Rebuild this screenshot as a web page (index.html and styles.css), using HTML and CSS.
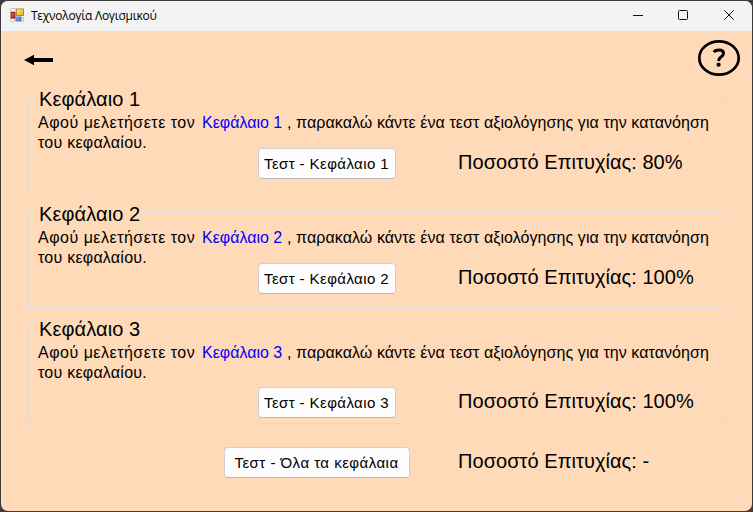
FILE: index.html
```html
<!DOCTYPE html>
<html lang="el">
<head>
<meta charset="utf-8">
<title>Τεχνολογία Λογισμικού</title>
<link rel="stylesheet" href="styles.css">
</head>
<body>
<div class="window">
  <header class="titlebar">
    <svg class="app-icon" width="14" height="14" viewBox="0 0 14 14">
      <defs>
        <linearGradient id="gold" x2="1" y2="1"><stop stop-color="#fff0a0"/><stop offset="1" stop-color="#e5a500"/></linearGradient>
        <linearGradient id="red" x2="1" y2="1"><stop stop-color="#e88070"/><stop offset="1" stop-color="#a81010"/></linearGradient>
        <linearGradient id="blue" x2="1" y2="1"><stop stop-color="#8db9f4"/><stop offset="1" stop-color="#2460c8"/></linearGradient>
      </defs>
      <path d="M.5.5h5v3h-5zM.5 10.500h4v3h-4zM11.500 9.500h2v4h-2z" fill="#f8f8f8" stroke="#c3c7cc"/>
      <rect x="6.500" y="1" width="7" height="6.500" fill="url(#gold)" stroke="#b68a20"/>
      <rect x="1" y="4.500" width="4" height="5.500" fill="url(#red)" stroke="#9c2020"/>
      <rect x="6" y="9" width="5" height="4" fill="url(#blue)" stroke="#5b86c8"/>
    </svg>
    <span class="title">Τεχνολογία Λογισμικού</span>
    <svg class="controls" width="104" height="12" viewBox="0 0 104 12" fill="none" stroke="#111">
      <path d="M0 6.500h10"/>
      <rect x="45.500" y="1.500" width="9" height="9" rx="1"/>
      <path d="M91.300 1.300l9.400 9.400M100.700 1.300l-9.400 9.400"/>
    </svg>
  </header>
  <main class="client">
    <nav class="toolbar">
      <svg class="back" width="30" height="12" viewBox="0 0 30 12"><path d="M0 6L10 .8V4H29V8H10V11.200Z"/></svg>
      <svg class="help" width="44" height="38" viewBox="0 0 44 38" fill="none" stroke="#000">
        <ellipse cx="22" cy="19" rx="19.700" ry="16.700" stroke-width="2.700"/>
        <path d="M16.700 13Q18.500 11 22 11Q26.500 11 26.500 14.500Q26.500 16.300 24 18Q21.700 19.500 21.700 22" stroke-width="3"/>
        <circle cx="21.600" cy="25.700" r="2.100" fill="#000" stroke="none"/>
      </svg>
    </nav>
    <fieldset class="chapter">
      <legend>Κεφάλαιο 1</legend>
      <p><span class="lead">Αφού μελετήσετε τον</span><a>Κεφάλαιο 1</a><span class="rest">, παρακαλώ κάντε ένα τεστ αξιολόγησης για την κατανόηση</span><br><span class="tail">του κεφαλαίου.</span></p>
      <div class="row"><button>Τεστ - Κεφάλαιο 1</button><span class="score">Ποσοστό Επιτυχίας: 80%</span></div>
    </fieldset>
    <fieldset class="chapter">
      <legend>Κεφάλαιο 2</legend>
      <p><span class="lead">Αφού μελετήσετε τον</span><a>Κεφάλαιο 2</a><span class="rest">, παρακαλώ κάντε ένα τεστ αξιολόγησης για την κατανόηση</span><br><span class="tail">του κεφαλαίου.</span></p>
      <div class="row"><button>Τεστ - Κεφάλαιο 2</button><span class="score">Ποσοστό Επιτυχίας: 100%</span></div>
    </fieldset>
    <fieldset class="chapter low">
      <legend>Κεφάλαιο 3</legend>
      <p><span class="lead">Αφού μελετήσετε τον</span><a>Κεφάλαιο 3</a><span class="rest">, παρακαλώ κάντε ένα τεστ αξιολόγησης για την κατανόηση</span><br><span class="tail">του κεφαλαίου.</span></p>
      <div class="row"><button>Τεστ - Κεφάλαιο 3</button><span class="score">Ποσοστό Επιτυχίας: 100%</span></div>
    </fieldset>
    <div class="row all"><button class="wide">Τεστ - Όλα τα κεφάλαια</button><span class="score">Ποσοστό Επιτυχίας: -</span></div>
  </main>
</div>
</body>
</html>
```
FILE: styles.css
```css
* { box-sizing: border-box; }
body {
  margin: 0;
  height: 512px;
  overflow: hidden;
  background: #3c3a3c;
  color: #000;
  font-family: "Liberation Sans", Arial, sans-serif;
}
.window {
  width: 751px;
  height: 510px;
  margin: 1px;
  border-radius: 7px;
  overflow: hidden;
  background: #ffdab9;
}
.titlebar {
  height: 30px;
  display: flex;
  align-items: center;
  padding: 0 15px 2px 9px;
  background: #f3f3f3;
}
.title {
  margin-left: 7px;
  font: 12px "Open Sans", "Noto Sans", sans-serif;
  letter-spacing: -0.27px;
}
.controls { margin-left: auto; }
.toolbar {
  display: flex;
  justify-content: space-between;
  align-items: flex-start;
  height: 55px;
  padding: 8px 11px 0 23px;
}
.back { margin-top: 15px; }
.chapter {
  width: 698px;
  height: 108px;
  margin: 0 0 7px 27px;
  padding: 0;
  border: 1px solid #dcdcdc;
}
legend {
  height: 23px;
  margin-left: 5px;
  padding: 0 4px 0 5px;
  font-size: 20px;
  line-height: 27px;
  letter-spacing: 0.1px;
}
p {
  margin: 4px 0 0 9px;
  font-size: 16px;
  line-height: 20px;
  white-space: nowrap;
}
p span, p a { display: inline-block; }
.lead { width: 164px; letter-spacing: 0.5px; }
.rest { letter-spacing: 0.075px; }
.tail { letter-spacing: 0.24px; }
p a { width: 85px; color: #00f; }
.row {
  display: flex;
  align-items: center;
  height: 31px;
  margin: -5px 0 0 229px;
}
.low .row { margin-top: 4px; }
button {
  width: 138px;
  height: 31px;
  flex: none;
  padding: 0 1px 1px 0;
  border: 1px solid #d0d0d0;
  border-bottom-color: #b8b8b8;
  border-radius: 4px;
  background: #fdfdfd;
  color: #000;
  font: 15px "Liberation Sans", Arial, sans-serif;
  letter-spacing: 0.42px;
  white-space: nowrap;
}
.score {
  margin-left: 62px;
  padding-bottom: 4px;
  font-size: 20px;
  line-height: 24px;
  letter-spacing: 0.04px;
  white-space: nowrap;
}
.all { margin: 23px 0 0 223px; }
.wide { width: 186px; letter-spacing: 0.48px; }
.all .score { margin-left: 48px; }
```
